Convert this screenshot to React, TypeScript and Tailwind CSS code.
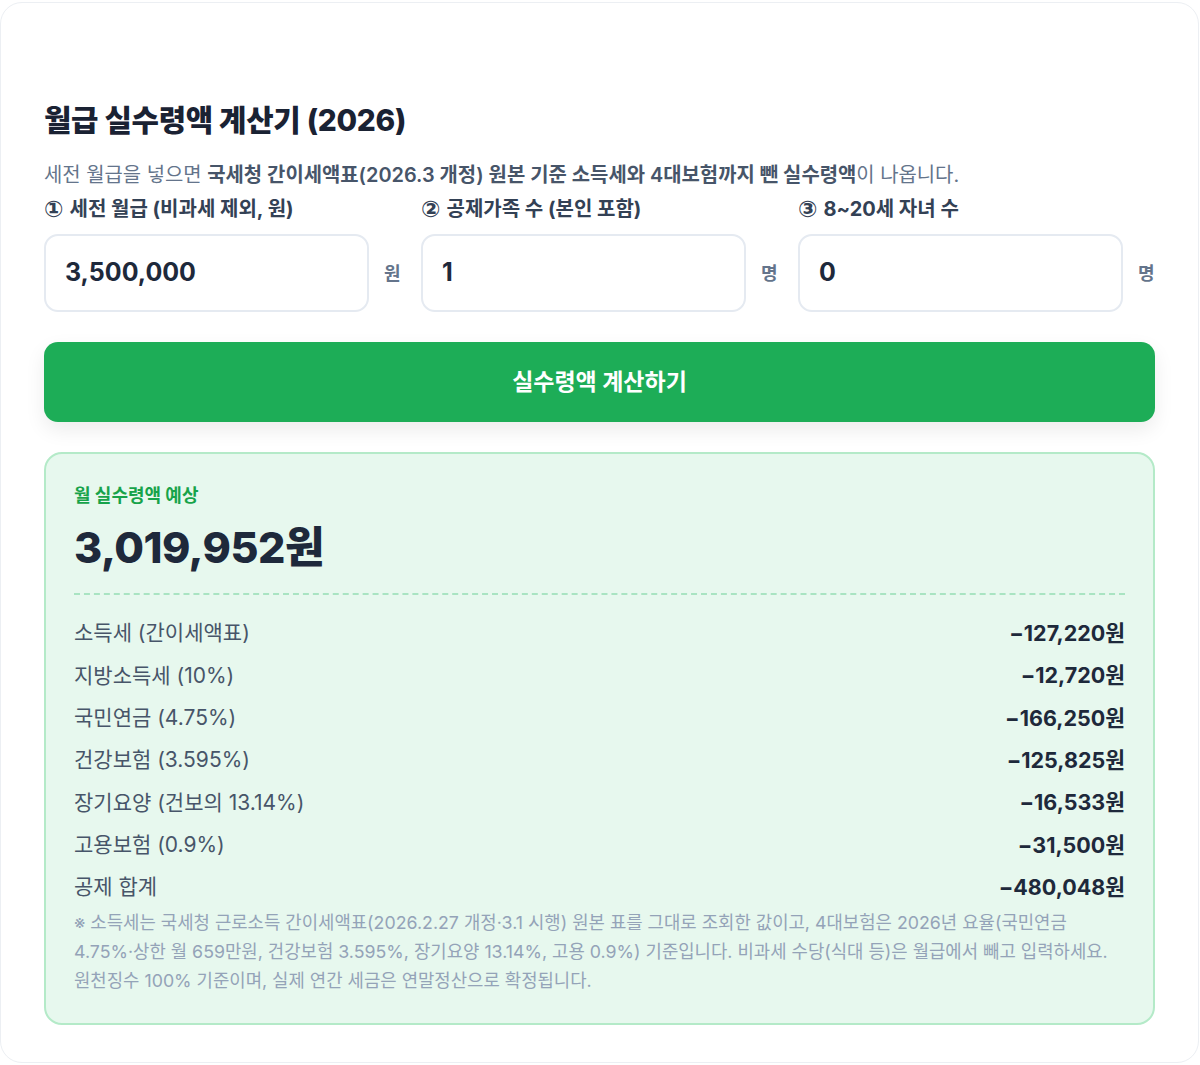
import React from "react";

const rows: [string, string][] = [
  ["소득세 (간이세액표)", "−127,220원"],
  ["지방소득세 (10%)", "−12,720원"],
  ["국민연금 (4.75%)", "−166,250원"],
  ["건강보험 (3.595%)", "−125,825원"],
  ["장기요양 (건보의 13.14%)", "−16,533원"],
  ["고용보험 (0.9%)", "−31,500원"],
  ["공제 합계", "−480,048원"],
];

function Field({ num, label, value, unit }: { num: string; label: string; value: string; unit: string }) {
  return (
    <div className="flex flex-col">
      <div className="h-[28px] text-[20px] leading-[28px] font-bold text-[#334155] flex items-center gap-[6px]">
        <span className="text-[23px] leading-none font-bold" style={{ fontFamily: '"DejaVu Sans", sans-serif' }}>{num}</span>
        <span>{label}</span>
      </div>
      <div className="mt-[11px] flex items-center gap-[15px]">
        <div className="flex-1 h-[78px] rounded-[14px] border-2 border-[#e5eaf1] bg-white flex items-center px-[19px] text-[25px] font-bold text-[#1e293b]">
          {value}
        </div>
        <div className="w-[17px] text-[18px] font-bold text-[#64748b]">{unit}</div>
      </div>
    </div>
  );
}

export default function App() {
  return (
    <div
      className="w-[1200px] h-[1065px] bg-white pt-[2px]"
      style={{ fontFamily: 'Inter, "Noto Sans CJK KR", sans-serif' }}
    >
      <div className="w-[1199px] h-[1061px] rounded-[22px] border border-[#eceff3] bg-white px-[43px] pt-[98px]">
        <h1 className="text-[29.8px] leading-[38px] font-extrabold text-[#1a2233] tracking-[-0.3px]">
          월급 실수령액 계산기 (2026)
        </h1>
        <p className="mt-[22px] text-[19.9px] leading-[28px] text-[#64748b]">
          세전 월급을 넣으면{" "}
          <b className="font-semibold text-[#475569]">국세청 간이세액표(2026.3 개정) 원본 기준 소득세와 4대보험까지 뺀 실수령액</b>
          이 나옵니다.
        </p>
        <div className="mt-[6px] grid grid-cols-3 gap-[20px]">
          <Field num="①" label="세전 월급 (비과세 제외, 원)" value="3,500,000" unit="원" />
          <Field num="②" label="공제가족 수 (본인 포함)" value="1" unit="명" />
          <Field num="③" label="8~20세 자녀 수" value="0" unit="명" />
        </div>
        <button className="mt-[30px] w-full h-[80px] rounded-[14px] bg-[#1dad57] text-white text-[23px] font-bold shadow-[0_8px_20px_rgba(0,0,0,0.08)]">
          실수령액 계산하기
        </button>
        <div className="mt-[30px] rounded-[18px] border-2 border-[#b4eac8] bg-[#e7f8ee] px-[28px] pt-[30px] pb-[28px]">
          <div className="text-[18px] leading-[24px] font-bold text-[#17a34a]">월 실수령액 예상</div>
          <div className="mt-[13px] text-[43px] leading-[53px] font-extrabold text-[#1e293b] tracking-[-0.5px]">
            3,019,952원
          </div>
          <div className="mt-[19px] border-t-2 border-dashed border-[#a9e4c2]" />
          <div className="mt-[17px] flex flex-col">
            {rows.map(([k, v]) => (
              <div key={k} className="h-[42.3px] flex items-center justify-between">
                <span className="text-[21px] text-[#475569]">{k}</span>
                <span className="text-[21.5px] font-bold text-[#1e293b]">{v}</span>
              </div>
            ))}
          </div>
          <p className="pr-[10px] text-[17.8px] leading-[29px] text-[#94a3b8]">
            ※ 소득세는 국세청 근로소득 간이세액표(2026.2.27 개정·3.1 시행) 원본 표를 그대로 조회한 값이고, 4대보험은 2026년 요율(국민연금 4.75%·상한 월 659만원, 건강보험 3.595%, 장기요양 13.14%, 고용 0.9%) 기준입니다. 비과세 수당(식대 등)은 월급에서 빼고 입력하세요. 원천징수 100% 기준이며, 실제 연간 세금은 연말정산으로 확정됩니다.
          </p>
        </div>
      </div>
    </div>
  );
}
